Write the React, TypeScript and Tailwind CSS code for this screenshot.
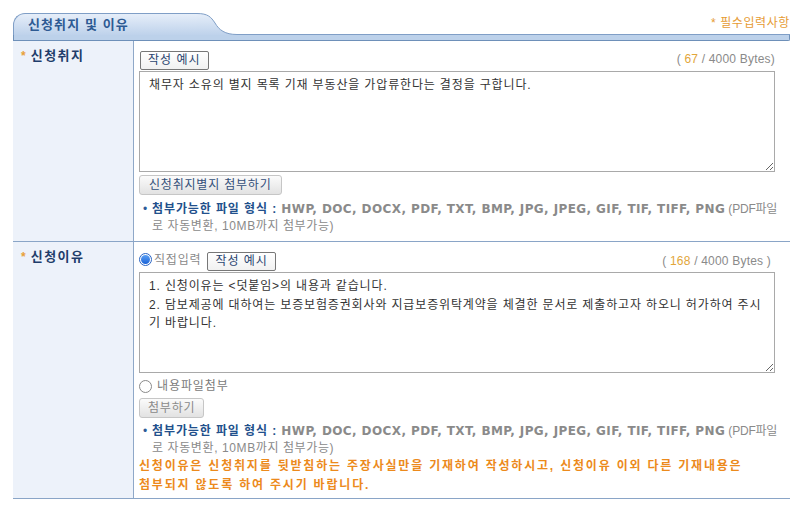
import React from "react";

const FONT = "font-['Liberation_Sans','Noto_Sans_CJK_KR',sans-serif]";

function Radio({ checked }: { checked: boolean }) {
  return checked ? (
    <span className="inline-flex items-center justify-center w-[13px] h-[13px] rounded-full border border-[#2a64c4] bg-white shrink-0">
      <span className="w-[9px] h-[9px] rounded-full bg-gradient-to-b from-[#5aa0f5] to-[#1a62d6]" />
    </span>
  ) : (
    <span className="inline-block w-[13px] h-[13px] rounded-full border border-[#8a8a8a] bg-white shrink-0" />
  );
}

function ExampleButton() {
  return (
    <button className="h-[19px] px-[7px] border border-[#777] rounded-[2px] bg-gradient-to-b from-white to-[#f1f1f1] text-[12px] leading-[17px] tracking-[1px] text-[#2b4670]">
      작성 예시
    </button>
  );
}

function Bytes({ n, tail }: { n: string; tail: string }) {
  return (
    <span className="text-[12px] text-[#8a8a8a] font-['Liberation_Sans',sans-serif] tracking-[0.2px] whitespace-nowrap">
      ( <span className="text-[#e2a63a]">{n}</span> / 4000 Bytes{tail}
    </span>
  );
}

function FileInfo() {
  return (
    <div className="flex text-[12px] leading-[17px] pl-[4px]">
      <span className="w-[9px] text-[#2e5c98] shrink-0">•</span>
      <div className="min-w-0">
        <div className="whitespace-nowrap">
          <span className="font-bold text-[#22508c] tracking-[0.9px]">첨부가능한 파일 형식 : </span>
          <span className="font-bold text-[#8a8a8a] font-['DejaVu_Sans','Noto_Sans_CJK_KR',sans-serif] text-[12px] tracking-[0.4px]">
            HWP, DOC, DOCX, PDF, TXT, BMP, JPG, JPEG, GIF, TIF, TIFF, PNG
          </span>
          <span className="text-[#8a8a8a] tracking-[-0.2px]"> (PDF파일</span>
        </div>
        <div className="text-[#8a8a8a] tracking-[0.6px]">로 자동변환, 10MB까지 첨부가능)</div>
      </div>
    </div>
  );
}

function Label({ text }: { text: string }) {
  return (
    <div className="w-[121px] shrink-0 bg-[#edf2fa] border-r border-[#8fa8c8] pt-[6px] pl-[8px]">
      <div className="flex items-center gap-[5px] h-[18px]">
        <span className="text-[#e8a13a] text-[12px] font-bold">*</span>
        <span className="text-[13px] font-bold text-[#1f3d6b] tracking-[1.5px]">{text}</span>
      </div>
    </div>
  );
}

export default function App() {
  return (
    <div className={`w-[800px] h-[510px] bg-white ${FONT} pt-[13px]`}>
      <div className="ml-[13px] w-[777px]">
        {/* header tab */}
        <div className="flex h-[22px]">
          <div className="w-[184px] h-[22px] rounded-tl-[12px] border-t border-l border-[#7f9ec6] bg-gradient-to-b from-[#e6eef9] to-[#bed2eb] flex items-center pl-[14px]">
            <span className="text-[13px] font-bold text-[#2d5a93] tracking-[1.1px]">신청취지 및 이유</span>
          </div>
          <svg width="50" height="22" viewBox="0 0 50 22" className="shrink-0 block">
            <defs>
              <linearGradient id="tabg" x1="0" y1="0" x2="0" y2="1">
                <stop offset="0" stopColor="#e6eef9" />
                <stop offset="1" stopColor="#bed2eb" />
              </linearGradient>
            </defs>
            <path
              d="M0,0.5 C11,0.5 14,4 18,10 C22,17 28,21.5 40,21.5 L50,21.5 L50,22 L0,22 Z"
              fill="url(#tabg)"
            />
            <path
              d="M0,0.5 C11,0.5 14,4 18,10 C22,17 28,21.5 40,21.5 L50,21.5"
              fill="none"
              stroke="#7f9ec6"
              strokeWidth="1"
            />
          </svg>
          <div className="flex-1 h-[22px] border-b border-[#7f9ec6] flex items-center justify-end">
            <span className="text-[12px] text-[#e69b33] -mt-[1px] tracking-[0.6px]">* 필수입력사항</span>
          </div>
        </div>
        <div className="h-[6px] bg-[#bcd1ea] border-l border-r border-b border-[#6e90b9] rounded-br-[2px]" />

        {/* row 1 */}
        <div className="flex border-b border-[#8aa5c7]">
          <Label text="신청취지" />
          <div className="flex-1 min-w-0 pl-[5px] pr-[15px] pt-[8px] pb-[6px]">
            <div className="flex items-center justify-between h-[19px]">
              <div className="pl-[1px]">
                <ExampleButton />
              </div>
              <Bytes n="67" tail=")" />
            </div>
            <textarea
              className="mt-[3px] block w-full h-[101px] border border-[#a9a9a9] pl-[9px] pr-[9px] pt-[4px] text-[12px] leading-[18px] tracking-[0.85px] text-[#333] outline-none"
              defaultValue="채무자 소유의 별지 목록 기재 부동산을 가압류한다는 결정을 구합니다."
            />
            <button className="mt-[3px] h-[20px] px-[9px] border border-[#c6c6c6] rounded-[3px] bg-gradient-to-b from-[#fbfbfb] to-[#e2e2e2] text-[12px] leading-[18px] tracking-[0.8px] text-[#34507a]">
              신청취지별지 첨부하기
            </button>
            <div className="mt-[5px]">
              <FileInfo />
            </div>
          </div>
        </div>

        {/* row 2 */}
        <div className="flex border-b border-[#8aa5c7]">
          <Label text="신청이유" />
          <div className="flex-1 min-w-0 pl-[5px] pr-[15px] pt-[8px] pb-[3px]">
            <div className="flex items-center justify-between h-[19px]">
              <div className="flex items-center">
                <Radio checked />
                <span className="ml-[2px] text-[12px] text-[#8a8a8a] tracking-[0.8px]">직접입력</span>
                <span className="ml-[6px]">
                  <ExampleButton />
                </span>
              </div>
              <span className="pr-[4px]">
                <Bytes n="168" tail=" )" />
              </span>
            </div>
            <textarea
              className="mt-[3px] block w-full h-[101px] border border-[#a9a9a9] pl-[9px] pr-[9px] pt-[4px] text-[12px] leading-[18.5px] tracking-[0.85px] text-[#333] outline-none"
              defaultValue={
                "1. 신청이유는 <덧붙임>의 내용과 같습니다.\n2. 담보제공에 대하여는 보증보험증권회사와 지급보증위탁계약을 체결한 문서로 제출하고자 하오니 허가하여 주시기 바랍니다."
              }
            />
            <div className="mt-[5px] flex items-center h-[16px]">
              <Radio checked={false} />
              <span className="ml-[5px] text-[12px] text-[#7a7a7a] tracking-[0.9px]">내용파일첨부</span>
            </div>
            <button className="mt-[4px] h-[20px] px-[8px] border border-[#c6c6c6] rounded-[3px] bg-gradient-to-b from-[#fbfbfb] to-[#e2e2e2] text-[12px] leading-[18px] tracking-[0.8px] text-[#8a8a8a]">
              첨부하기
            </button>
            <div className="mt-[4px]">
              <FileInfo />
            </div>
            <div className="text-[12px] leading-[19px] font-bold text-[#ec8a1c] whitespace-nowrap tracking-[1.8px]">
              신청이유은 신청취지를 뒷받침하는 주장사실만을 기재하여 작성하시고, 신청이유 이외 다른 기재내용은
              <br />
              첨부되지 않도록 하여 주시기 바랍니다.
            </div>
          </div>
        </div>
      </div>
    </div>
  );
}
